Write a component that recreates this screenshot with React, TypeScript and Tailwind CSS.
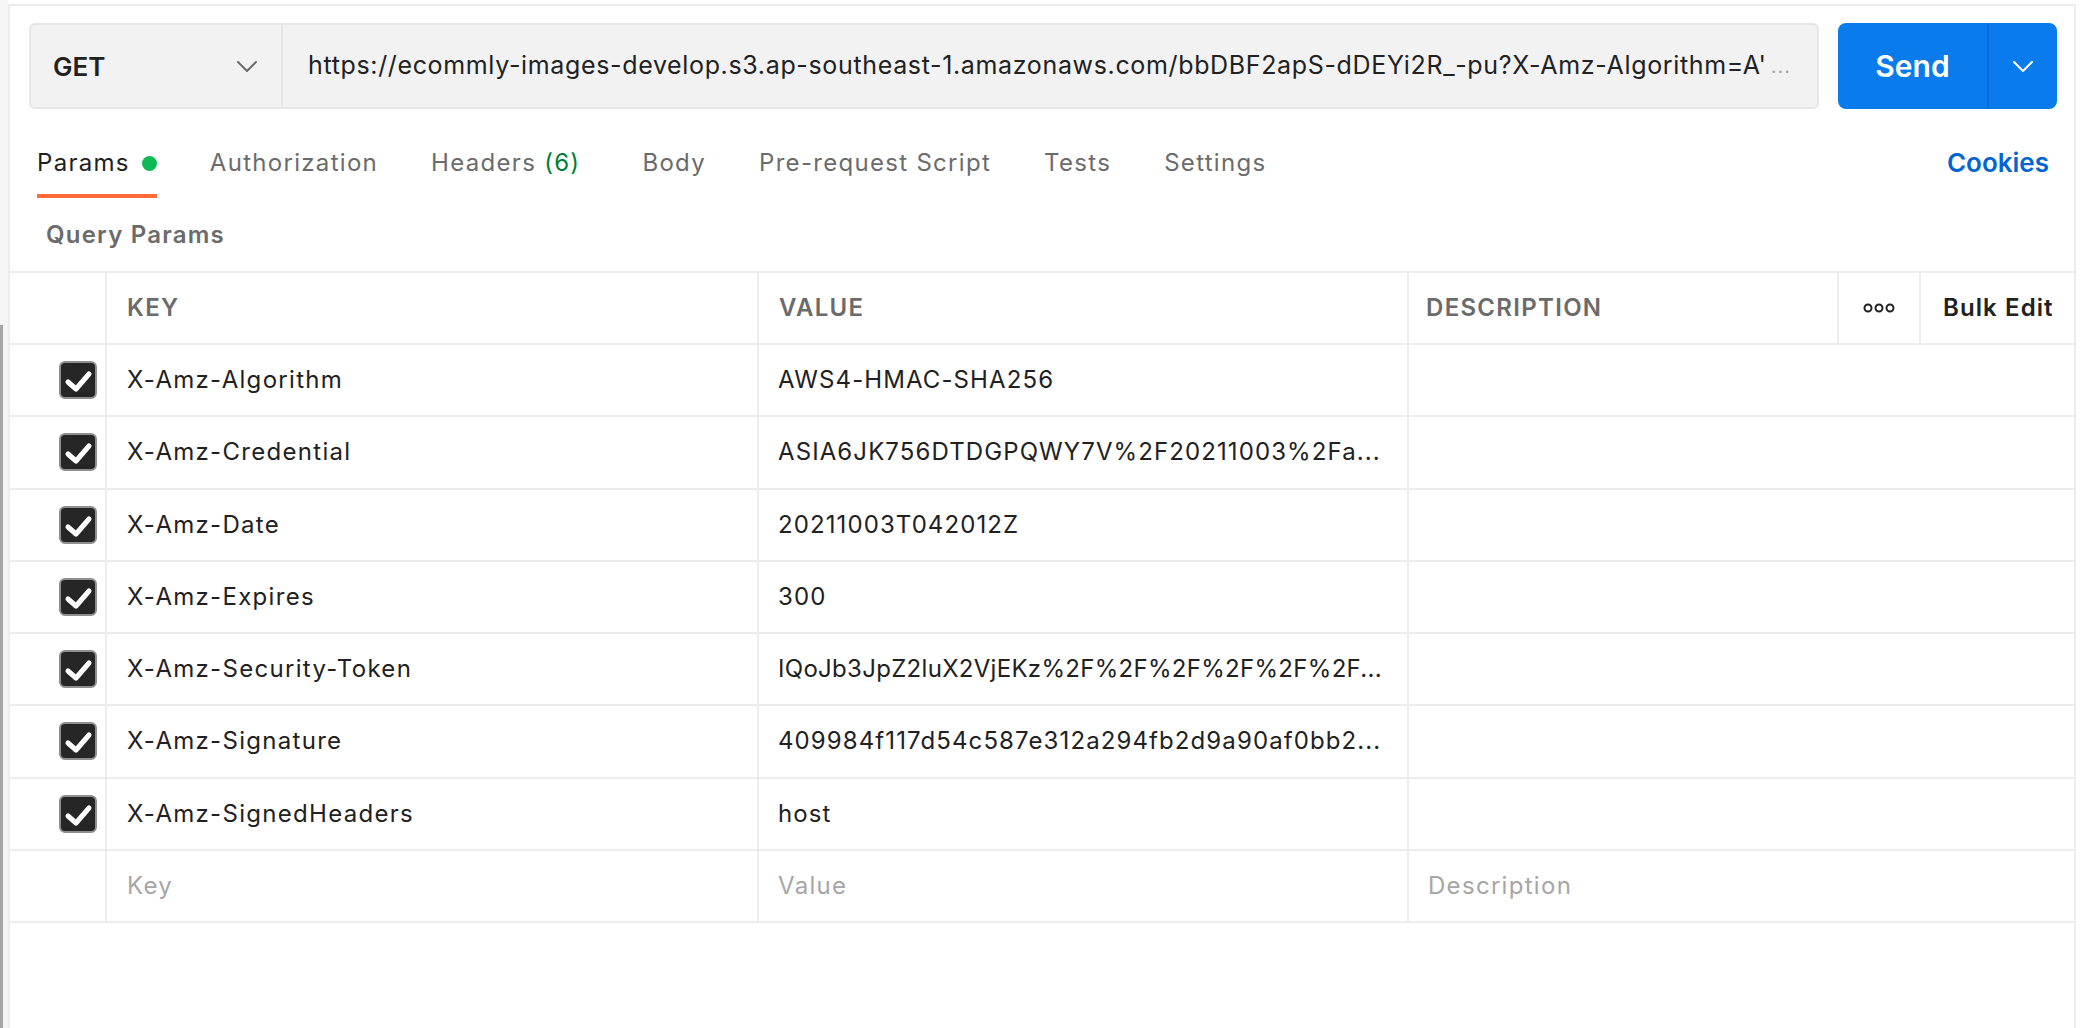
import type { ReactNode } from "react"

type Param = { key: string; value: string; tight?: boolean }

const params: Param[] = [
  { key: "X-Amz-Algorithm", value: "AWS4-HMAC-SHA256" },
  { key: "X-Amz-Credential", value: "ASIA6JK756DTDGPQWY7V%2F20211003%2Fa..." },
  { key: "X-Amz-Date", value: "20211003T042012Z" },
  { key: "X-Amz-Expires", value: "300" },
  { key: "X-Amz-Security-Token", value: "IQoJb3JpZ2luX2VjEKz%2F%2F%2F%2F%2F%2F...", tight: true },
  { key: "X-Amz-Signature", value: "409984f117d54c587e312a294fb2d9a90af0bb2..." },
  { key: "X-Amz-SignedHeaders", value: "host" },
]

function Chevron({ className }: { className?: string }) {
  return (
    <svg width="20" height="11" viewBox="0 0 20 11" fill="none" className={className}>
      <path d="M1 1l9 9 9-9" stroke="currentColor" strokeWidth="2" strokeLinecap="round" strokeLinejoin="round" />
    </svg>
  )
}

function Checkbox() {
  return (
    <div className="w-[38px] h-[38px] rounded-[6px] bg-[#262626] border-2 border-[#8f8f8f] flex items-center justify-center">
      <svg width="34" height="34" viewBox="0 0 34 34" fill="none">
        <path d="M7 19l8 7 13-15" stroke="white" strokeWidth="5" strokeLinecap="round" strokeLinejoin="round" />
      </svg>
    </div>
  )
}

function Tab({ children, active }: { children: ReactNode; active?: boolean }) {
  return (
    <div className="flex flex-col">
      <div className={`h-[32px] leading-[32px] text-[24px] tracking-[1.3px] flex items-center ${active ? "text-[#212121]" : "text-[#6b6b6b]"}`}>
        {children}
      </div>
      <div className={`mt-[15px] h-[4px] ${active ? "bg-[#ff6c37]" : "bg-transparent"}`} />
    </div>
  )
}

export default function App() {
  return (
    <div className="flex w-[2090px] h-[1028px] bg-white overflow-hidden font-['Inter','Noto_Sans',sans-serif]">
      {/* left splitter strip */}
      <div className="w-[8px] bg-[#f5f5f5] flex flex-col">
        <div className="h-[325px]" />
        <div className="w-[3px] flex-1 bg-[#a6a6a6]" />
      </div>

      <div className="w-[2068px] mt-[4px] border-t-2 border-l-2 border-r-2 border-[#ededed] flex flex-col">
        {/* url bar */}
        <div className="flex pt-[17px] pl-[19px] pr-[17px] gap-[19px]">
          <div className="flex h-[86px] w-[1790px] rounded-[6px] border-2 border-[#e6e6e6] bg-[#f2f2f2]">
            <div className="w-[252px] border-r-2 border-[#e6e6e6] flex items-center justify-between pl-[22px] pr-[24px]">
              <span className="text-[26px] font-semibold text-[#212121]">GET</span>
              <Chevron className="text-[#6b6b6b]" />
            </div>
            <div className="flex-1 flex items-center pl-[25px] overflow-hidden whitespace-nowrap text-[25px] tracking-[0.65px] text-[#212121]">
              <span>https://ecommly-images-develop.s3.ap-southeast-1.amazonaws.com/bbDBF2apS-dDEYi2R_-pu?X-Amz-Algorithm=A'</span>
              <span className="text-[#a6a6a6] text-[20px] ml-[4px] tracking-[1px]">...</span>
            </div>
          </div>
          <div className="flex h-[86px] w-[219px] rounded-[8px] bg-[#097bed] text-white">
            <div className="w-[149px] flex items-center justify-center text-[30px] font-semibold">Send</div>
            <div className="w-[2px] bg-[#0a6dd4]" />
            <div className="flex-1 flex items-center justify-center">
              <Chevron className="text-white" />
            </div>
          </div>
        </div>

        {/* tabs */}
        <div className="flex justify-between items-start mt-[38px] pl-[27px] pr-[25px]">
          <div className="flex gap-[53px]">
            <Tab active>
              Params
              <span className="ml-[12px] w-[15px] h-[15px] rounded-full bg-[#0cbb52]" />
            </Tab>
            <Tab>Authorization</Tab>
            <Tab>
              Headers<span className="ml-[8px] text-[#007f31]">(6)</span>
            </Tab>
            <div className="ml-[9px]">
              <Tab>Body</Tab>
            </div>
            <Tab>Pre-request Script</Tab>
            <Tab>Tests</Tab>
            <Tab>Settings</Tab>
          </div>
          <div className="h-[32px] leading-[32px] text-[26px] font-semibold text-[#0265d2]">Cookies</div>
        </div>

        <div className="mt-[21px] pl-[36px] h-[32px] leading-[32px] text-[24px] tracking-[1.2px] font-semibold text-[#6b6b6b]">
          Query Params
        </div>

        {/* table */}
        <div className="mt-[20px] border-t-2 border-[#ededed] text-[24px] tracking-[1.3px]">
          <div className="flex h-[72px] border-b-2 border-[#ededed] font-semibold text-[#6b6b6b]">
            <div className="w-[97px] border-r-2 border-[#ededed]" />
            <div className="w-[652px] border-r-2 border-[#ededed] flex items-center pl-[20px]">KEY</div>
            <div className="w-[650px] border-r-2 border-[#ededed] flex items-center pl-[20px]">VALUE</div>
            <div className="w-[430px] border-r-2 border-[#ededed] flex items-center pl-[17px]">DESCRIPTION</div>
            <div className="w-[82px] border-r-2 border-[#ededed] flex items-center justify-center">
              <svg width="32" height="10" viewBox="0 0 32 10" fill="none">
                <circle cx="5" cy="5" r="3.5" stroke="#212121" strokeWidth="2" />
                <circle cx="16" cy="5" r="3.5" stroke="#212121" strokeWidth="2" />
                <circle cx="27" cy="5" r="3.5" stroke="#212121" strokeWidth="2" />
              </svg>
            </div>
            <div className="flex-1 flex items-center pl-[22px] text-[#212121] tracking-[1.1px]">Bulk Edit</div>
          </div>

          {params.map((p) => (
            <div key={p.key} className="flex h-[72.25px] border-b-2 border-[#ededed] text-[#212121]">
              <div className="w-[97px] border-r-2 border-[#ededed] flex items-center pl-[49px]">
                <Checkbox />
              </div>
              <div className="w-[652px] border-r-2 border-[#ededed] flex items-center pl-[20px]">{p.key}</div>
              <div
                className={`w-[650px] border-r-2 border-[#ededed] flex items-center pl-[19px] pr-[4px] overflow-hidden whitespace-nowrap ${
                  p.tight ? "tracking-[0.3px]" : "tracking-[1.1px]"
                }`}
              >
                {p.value}
              </div>
              <div className="flex-1" />
            </div>
          ))}

          <div className="flex h-[72.25px] border-b-2 border-[#ededed] text-[#a6a6a6]">
            <div className="w-[97px] border-r-2 border-[#ededed]" />
            <div className="w-[652px] border-r-2 border-[#ededed] flex items-center pl-[20px]">Key</div>
            <div className="w-[650px] border-r-2 border-[#ededed] flex items-center pl-[19px]">Value</div>
            <div className="flex-1 flex items-center pl-[19px]">Description</div>
          </div>
        </div>
      </div>
    </div>
  )
}
